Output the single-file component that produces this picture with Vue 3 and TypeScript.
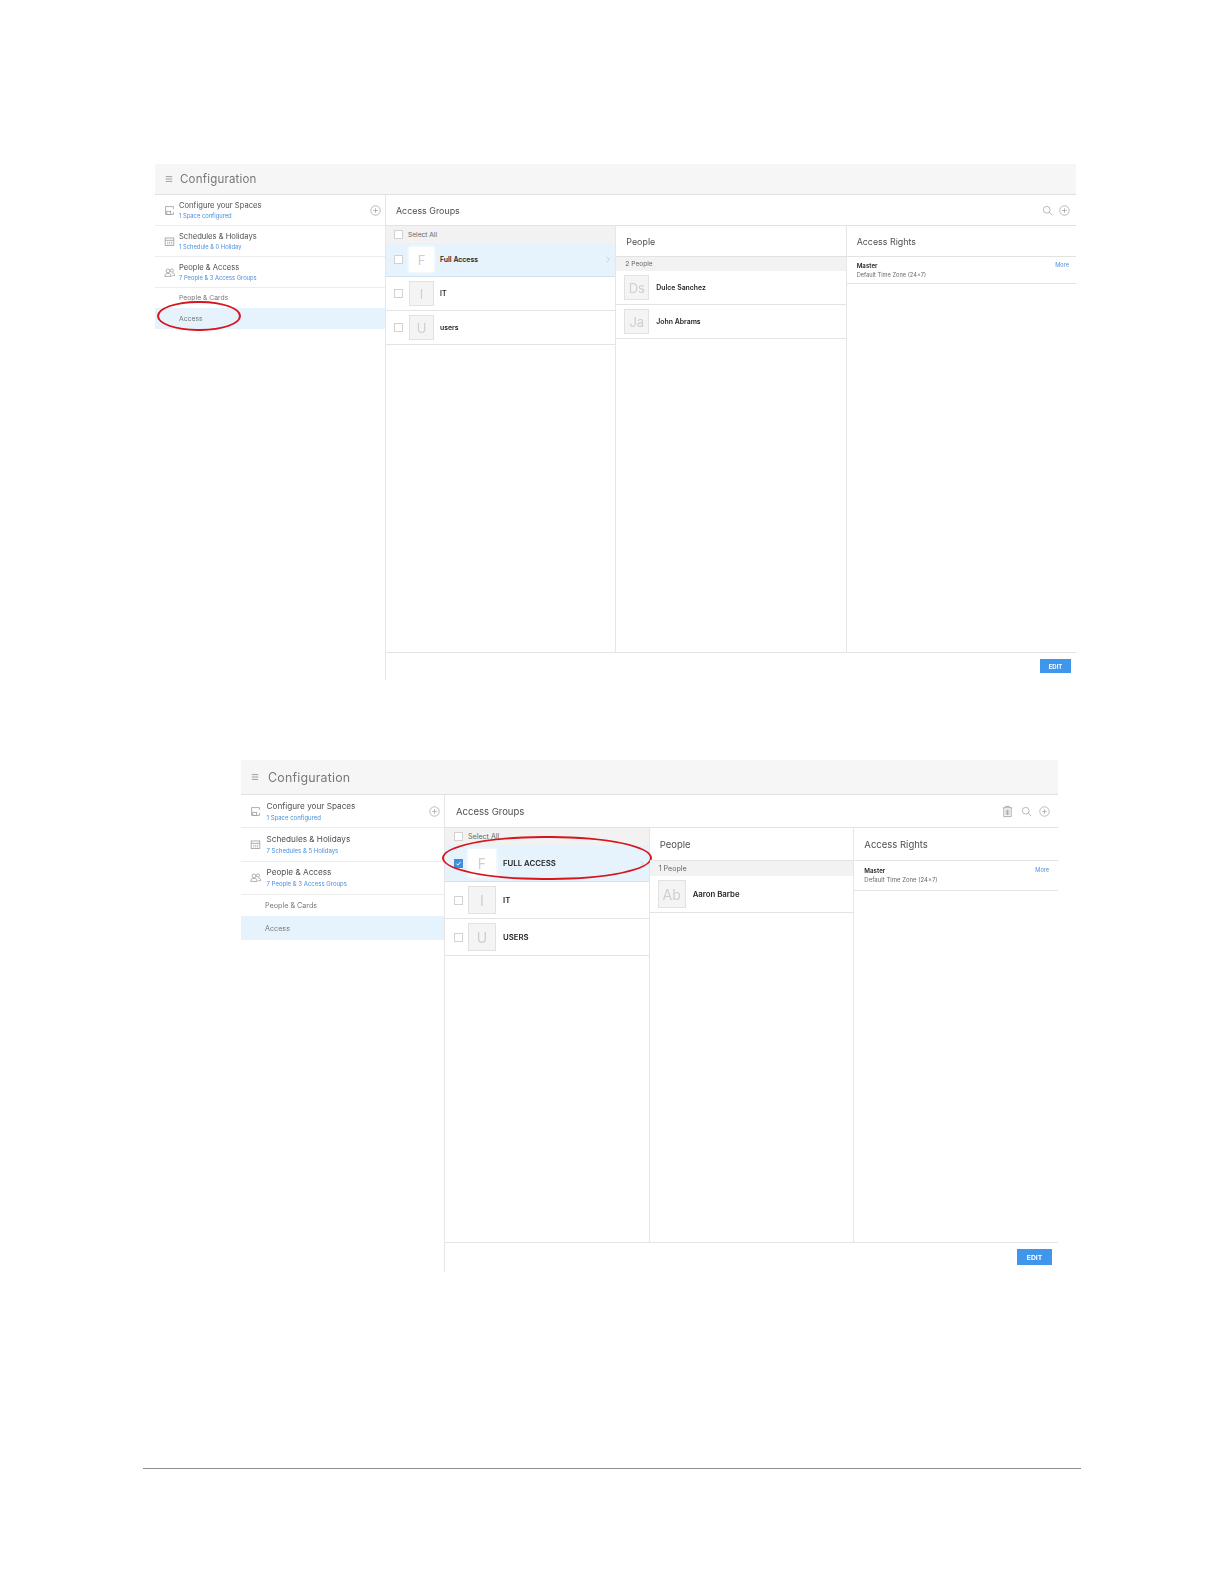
<script setup lang="ts">
interface Side { icon: string; title: string; sub: string; plus?: boolean }
interface Group { letter: string; name: string; selected?: boolean; checked?: boolean }
interface Person { initials: string; name: string }
interface Panel {
  cls: string; sides: Side[]; groups: Group[]; count: string; people: Person[];
  zone: string; trash: boolean;
}
const panels: Panel[] = [
  {
    cls: 'p1', trash: false, count: '2 People', zone: 'Default Time Zone (24x7)',
    sides: [
      { icon: 'space', title: 'Configure your Spaces', sub: '1 Space configured', plus: true },
      { icon: 'cal', title: 'Schedules & Holidays', sub: '1 Schedule & 0 Holiday' },
      { icon: 'people', title: 'People & Access', sub: '7 People & 3 Access Groups' },
    ],
    groups: [
      { letter: 'F', name: 'Full Access', selected: true },
      { letter: 'I', name: 'IT' },
      { letter: 'U', name: 'users' },
    ],
    people: [
      { initials: 'Ds', name: 'Dulce Sanchez' },
      { initials: 'Ja', name: 'John Abrams' },
    ],
  },
  {
    cls: 'p2', trash: true, count: '1 People', zone: 'Default Time Zone (24x7)',
    sides: [
      { icon: 'space', title: 'Configure your Spaces', sub: '1 Space configured', plus: true },
      { icon: 'cal', title: 'Schedules & Holidays', sub: '7 Schedules & 5 Holidays' },
      { icon: 'people', title: 'People & Access', sub: '7 People & 3 Access Groups' },
    ],
    groups: [
      { letter: 'F', name: 'FULL ACCESS', selected: true, checked: true },
      { letter: 'I', name: 'IT' },
      { letter: 'U', name: 'USERS' },
    ],
    people: [{ initials: 'Ab', name: 'Aaron Barbe' }],
  },
];
</script>

<template>
  <div class="page">
    <section v-for="p in panels" :key="p.cls" class="panel" :class="p.cls">
      <header class="top">
        <svg class="burger" viewBox="0 0 10 8"><path d="M1 1h8M1 4h8M1 7h8" /></svg>
        <span>Configuration</span>
      </header>
      <div class="body">
        <aside class="side">
          <div v-for="s in p.sides" :key="s.title" class="side-row">
            <svg class="side-ico" viewBox="0 0 14 14">
              <template v-if="s.icon === 'space'">
                <path d="M2 12V2h10v3M2 12h10V9" />
                <rect x="3.5" y="8" width="5" height="4" />
              </template>
              <template v-else-if="s.icon === 'cal'">
                <rect x="1.5" y="2.5" width="11" height="9.5" />
                <path d="M1.5 5.5h11M4 8h1.5M6.5 8H8M9 8h1.5M4 10h1.5M6.5 10H8M9 10h1.5" />
              </template>
              <template v-else>
                <circle cx="5" cy="5" r="2.4" />
                <path d="M1 12c0-3 1.500-4 4-4s4 1 4 4z" />
                <circle cx="10" cy="4.500" r="2" />
                <path d="M10.500 7.500c1.800 0 3 1 3 3.500h-3" />
              </template>
            </svg>
            <div class="side-txt">
              <div class="side-title">{{ s.title }}</div>
              <div class="side-sub">{{ s.sub }}</div>
            </div>
            <svg v-if="s.plus" class="act" viewBox="0 0 14 14">
              <circle cx="7" cy="7" r="6" /><path d="M7 4v6M4 7h6" />
            </svg>
          </div>
          <div class="sub-row">People &amp; Cards</div>
          <div class="sub-row active">Access</div>
          <div class="ring ring-side"></div>
        </aside>
        <main class="main">
          <div class="main-head">
            <span>Access Groups</span>
            <div class="acts">
              <svg v-if="p.trash" class="act trash" viewBox="0 0 14 14">
                <path d="M2 3h10M5 3V1.500h4V3M3 3v9.500h8V3M5.500 5v6M7 5v6M8.500 5v6" />
              </svg>
              <svg class="act" viewBox="0 0 14 14">
                <circle cx="6" cy="6" r="4.300" /><path d="M9.200 9.200L13 13" />
              </svg>
              <svg class="act" viewBox="0 0 14 14">
                <circle cx="7" cy="7" r="6" /><path d="M7 4v6M4 7h6" />
              </svg>
            </div>
          </div>
          <div class="cols">
            <div class="col col-groups">
              <div class="select-all"><i class="box"></i><span>Select All</span></div>
              <div v-for="g in p.groups" :key="g.name" class="g-row" :class="{ sel: g.selected }">
                <i class="box" :class="{ on: g.checked }">
                  <svg v-if="g.checked" viewBox="0 0 10 10"><path d="M2 5.200l2.100 2.100L8 2.800" /></svg>
                </i>
                <div class="avatar">{{ g.letter }}</div>
                <span class="name">{{ g.name }}</span>
                <svg v-if="g.selected" class="chev" viewBox="0 0 6 10"><path d="M1 1l4 4-4 4" /></svg>
              </div>
              <div class="ring ring-group"></div>
            </div>
            <div class="col col-people">
              <div class="col-head">People</div>
              <div class="count">{{ p.count }}</div>
              <div v-for="u in p.people" :key="u.name" class="u-row">
                <div class="avatar">{{ u.initials }}</div>
                <span class="name">{{ u.name }}</span>
              </div>
            </div>
            <div class="col col-rights">
              <div class="col-head">Access Rights</div>
              <div class="right-row">
                <div class="right-line">
                  <b>Master</b>
                  <span class="more">More</span>
                </div>
                <div class="zone">{{ p.zone }}</div>
              </div>
            </div>
          </div>
          <footer class="foot"><button class="edit" type="button">EDIT</button></footer>
        </main>
      </div>
    </section>
    <div class="rule"></div>
  </div>
</template>

<style>
html, body { margin: 0; background: #fff; }
</style>

<style scoped>
.page {
  width: 1224px;
  height: 1584px;
  padding-top: 164px;
  box-sizing: border-box;
  font-family: Inter, "Liberation Sans", sans-serif;
  color: #404040;
  overflow: hidden;
}
.panel {
  display: flex;
  flex-direction: column;
  filter: blur(0.3px);
}
.p1 {
  --top: 31px; --side: 230px; --srow: 31px; --sub1: 19.500px; --sub2: 21.500px;
  --mhead: 31px; --sa: 17px; --row: 34px; --chead: 31px; --cnt: 14px; --urow: 34px;
  --rrow: 27px; --av: 25px; --foot: 28px; --pad: 10px; --rpad: 10px;
  --f-top: 11.500px; --f-h: 8.900px; --f-t: 7.600px; --f-s: 5.800px; --f-n: 6.900px; --f-av: 13px;
  --f-sa: 6.600px; --f-zone: 5.700px;
  --gpad: 8px; --gav: 6px; --gname: 6px; --aright: 6px; --agap: 6px; --mright: 7px; --ipad: 9px; --igap: 4px;
  --ttop: 1px; --tgap: 3px; --tgl: 7px;
  margin-left: 155px; width: 921px; height: 516px;
}
.p2 {
  --top: 35px; --side: 203px; --srow: 33.300px; --sub1: 21.500px; --sub2: 24px;
  --mhead: 33px; --sa: 17px; --row: 37px; --chead: 33px; --cnt: 15px; --urow: 37px;
  --rrow: 30px; --av: 28px; --foot: 30px; --pad: 11px; --rpad: 10px;
  --f-top: 12.400px; --f-h: 9.500px; --f-t: 8.200px; --f-s: 6px; --f-n: 7.800px; --f-av: 14px;
  --f-sa: 7.100px; --f-zone: 6px;
  --gpad: 9px; --gav: 5px; --gname: 7px; --aright: 8px; --agap: 7px; --mright: 9px; --ipad: 9px; --igap: 5.500px;
  --ttop: 0px; --tgap: 5px; --tgl: 9px;
  margin-left: 241px; margin-top: 80px; width: 817px; height: 512px;
}
.top {
  height: var(--top);
  flex: none;
  background: #f6f6f6;
  border-bottom: 1px solid #e0e0e0;
  box-sizing: border-box;
  display: flex;
  align-items: center;
  gap: var(--tgl);
  padding-left: 10px;
  font-size: var(--f-top);
  color: #777;
  letter-spacing: 0.2px;
}
.burger { width: 8px; height: 8px; fill: none; stroke: #8a8a8a; stroke-width: 1; }
.body { flex: 1; display: flex; min-height: 0; }
.side {
  width: var(--side);
  flex: none;
  position: relative;
}
.side-row {
  height: var(--srow);
  box-sizing: border-box;
  border-bottom: 1px solid #ececec;
  display: flex;
  align-items: center;
  padding-left: var(--ipad);
  padding-right: 4px;
}
.side-ico { width: 11px; height: 11px; margin-right: var(--igap); fill: none; stroke: #9a9a9a; stroke-width: 1; flex: none; }
.side-txt { flex: 1; line-height: 1; padding-top: var(--ttop); }
.side-title { font-size: var(--f-t); color: #505050; margin-bottom: var(--tgap); }
.side-sub { font-size: var(--f-s); color: #4a8fdc; }
.act { width: 11px; height: 11px; fill: none; stroke: #a8a8a8; stroke-width: 1; flex: none; }
.act.trash { width: 13px; height: 13px; }
.sub-row {
  height: var(--sub1);
  display: flex;
  align-items: center;
  padding-left: 24px;
  font-size: 6.800px;
  color: #777;
}
.sub-row.active { height: var(--sub2); background: #e6f3fc; }
.p2 .sub-row { font-size: 7.200px; }
.main {
  flex: 1;
  min-width: 0;
  display: flex;
  flex-direction: column;
  border-left: 1px solid #e6e6e6;
}
.main-head {
  height: var(--mhead);
  flex: none;
  box-sizing: border-box;
  border-bottom: 1px solid #e2e2e2;
  display: flex;
  align-items: center;
  justify-content: space-between;
  padding: 0 var(--aright) 0 var(--pad);
  font-size: var(--f-h);
  color: #505050;
}
.acts { display: flex; gap: var(--agap); align-items: center; }
.cols { flex: 1; display: flex; min-height: 0; }
.col {
  flex: 1 1 0;
  min-width: 0;
  position: relative;
  border-right: 1px solid #e6e6e6;
}
.col:last-child { border-right: 0; }
.select-all {
  height: var(--sa);
  background: #f2f2f2;
  display: flex;
  align-items: center;
  padding-left: var(--gpad);
  gap: 5px;
  font-size: var(--f-sa);
  color: #666;
}
.box {
  width: 7px;
  height: 7px;
  flex: none;
  border: 1px solid #d2d2d2;
  background: #fff;
  display: block;
}
.box svg { display: block; width: 7px; height: 7px; fill: none; stroke: #fff; stroke-width: 1.400; }
.box.on { background: #3f8fe0; border-color: #3f8fe0; }
.g-row {
  height: var(--row);
  box-sizing: border-box;
  border-bottom: 1px solid #e4e4e4;
  display: flex;
  align-items: center;
  padding-left: var(--gpad);
  padding-right: 5px;
}
.g-row .avatar { margin-left: var(--gav); margin-right: var(--gname); }
.g-row.sel { background: #e6f3fc; border-bottom-color: #cfe3f3; }
.g-row.sel .avatar { background: #fff; border-color: #fff; box-shadow: 0 0 4px #fff; }
.g-row.sel .name { padding-bottom: 1px; }
.avatar {
  width: var(--av);
  height: var(--av);
  flex: none;
  box-sizing: border-box;
  background: #f4f4f4;
  border: 1px solid #e2e2e2;
  color: #cfcfcf;
  font-size: var(--f-av);
  display: flex;
  align-items: center;
  justify-content: center;
}
.name { font-size: var(--f-n); font-weight: 600; color: #262626; flex: 1; }
.chev { width: 4px; height: 7px; fill: none; stroke: #b0b0b0; stroke-width: 0.800; flex: none; }
.col-head {
  height: var(--chead);
  box-sizing: border-box;
  border-bottom: 1px solid #e2e2e2;
  display: flex;
  align-items: center;
  padding-left: var(--rpad);
  font-size: var(--f-h);
  color: #505050;
}
.count {
  height: var(--cnt);
  background: #f2f2f2;
  display: flex;
  align-items: center;
  padding-left: 9px;
  font-size: var(--f-sa);
  color: #666;
}
.u-row {
  height: var(--urow);
  box-sizing: border-box;
  border-bottom: 1px solid #e4e4e4;
  display: flex;
  align-items: center;
  padding-left: 8px;
}
.u-row .avatar { margin-right: 7px; }
.right-row {
  height: var(--rrow);
  box-sizing: border-box;
  border-bottom: 1px solid #e4e4e4;
  display: flex;
  flex-direction: column;
  justify-content: center;
  padding: 0 var(--mright) 0 var(--rpad);
  line-height: 1;
}
.right-line { display: flex; justify-content: space-between; align-items: center; margin-bottom: 3px; }
.right-line b { font-size: 6.200px; font-weight: 600; color: #262626; }
.more { font-size: 5.600px; color: #4a8fdc; }
.zone { font-size: var(--f-zone); color: #6a6a6a; }
.foot {
  height: var(--foot);
  flex: none;
  box-sizing: border-box;
  border-top: 1px solid #e4e4e4;
  display: flex;
  justify-content: flex-end;
  align-items: flex-start;
  padding-top: 6px;
  padding-right: 5px;
}
.edit {
  width: 31px;
  height: 14px;
  padding: 0;
  border: 0;
  background: #3f96ea;
  color: #fff;
  font: 700 6px Inter, "Liberation Sans", sans-serif;
}
.p2 .foot { padding-top: 6px; padding-right: 6px; }
.p2 .edit { width: 35px; height: 16px; font-size: 6.800px; }
.ring {
  position: absolute;
  box-sizing: border-box;
  border: 2px solid #d8141c;
  border-radius: 48% / 50%;
  pointer-events: none;
}
.ring-side { display: none; left: 2px; top: 106px; width: 84px; height: 30px; }
.p1 .ring-side { display: block; }
.ring-group { display: none; left: -3px; top: 8px; width: 210px; height: 44px; }
.p2 .ring-group { display: block; }
.rule {
  margin-top: 196px;
  margin-left: 143px;
  width: 938px;
  height: 1px;
  background: #8c8c8c;
}
</style>
